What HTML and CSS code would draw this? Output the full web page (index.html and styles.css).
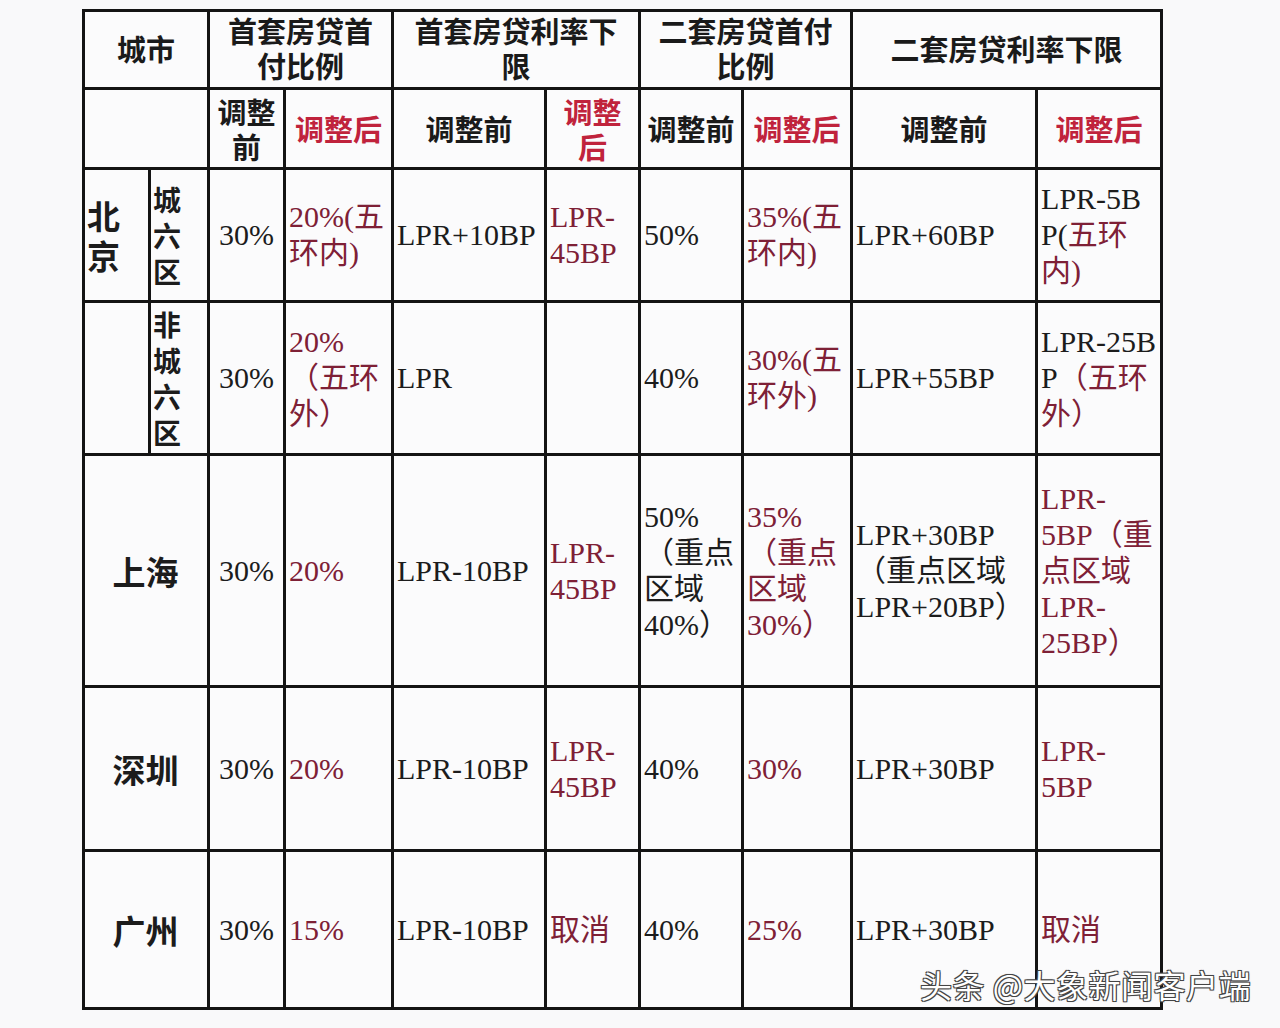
FILE: index.html
```html
<!DOCTYPE html>
<html lang="zh-CN">
<head>
<meta charset="utf-8">
<title>一线城市房贷政策调整</title>
<link rel="stylesheet" href="styles.css">
</head>
<body>
<div class="page">
  <table class="policy">
    <colgroup>
      <col class="c1"><col class="c2"><col class="c3"><col class="c4"><col class="c5">
      <col class="c6"><col class="c7"><col class="c8"><col class="c9"><col class="c10">
    </colgroup>
    <tr class="r1">
      <th colspan="2" class="h">城市</th>
      <th colspan="2" class="h">首套房贷首<br>付比例</th>
      <th colspan="2" class="h">首套房贷利率下<br>限</th>
      <th colspan="2" class="h">二套房贷首付<br>比例</th>
      <th colspan="2" class="h">二套房贷利率下限</th>
    </tr>
    <tr class="r2">
      <th colspan="2" class="h"></th>
      <th class="h">调整<br>前</th>
      <th class="h red">调整后</th>
      <th class="h">调整前</th>
      <th class="h red">调整<br>后</th>
      <th class="h">调整前</th>
      <th class="h red">调整后</th>
      <th class="h">调整前</th>
      <th class="h red">调整后</th>
    </tr>
    <tr class="r3">
      <td class="city big">北<br>京</td>
      <td class="city">城<br>六<br>区</td>
      <td class="mid">30%</td>
      <td class="red">20%(五<br>环内)</td>
      <td>LPR+10BP</td>
      <td class="red">LPR-<br>45BP</td>
      <td>50%</td>
      <td class="red">35%(五<br>环内)</td>
      <td>LPR+60BP</td>
      <td>LPR-5B<br>P(<span class="red">五环<br>内)</span></td>
    </tr>
    <tr class="r4">
      <td class="city"></td>
      <td class="city">非<br>城<br>六<br>区</td>
      <td class="mid">30%</td>
      <td class="red">20%<br>（五环<br>外）</td>
      <td>LPR</td>
      <td></td>
      <td>40%</td>
      <td class="red">30%(五<br>环外)</td>
      <td>LPR+55BP</td>
      <td>LPR-25B<br>P<span class="red">（五环<br>外）</span></td>
    </tr>
    <tr class="r5">
      <td colspan="2" class="city big center">上海</td>
      <td class="mid">30%</td>
      <td class="red">20%</td>
      <td>LPR-10BP</td>
      <td class="red">LPR-<br>45BP</td>
      <td>50%<br>（重点<br>区域<br>40%）</td>
      <td class="red">35%<br>（重点<br>区域<br>30%）</td>
      <td>LPR+30BP<br>（重点区域<br>LPR+20BP）</td>
      <td class="red">LPR-<br>5BP（重<br>点区域<br>LPR-<br>25BP）</td>
    </tr>
    <tr class="r6">
      <td colspan="2" class="city big center">深圳</td>
      <td class="mid">30%</td>
      <td class="red">20%</td>
      <td>LPR-10BP</td>
      <td class="red">LPR-<br>45BP</td>
      <td>40%</td>
      <td class="red">30%</td>
      <td>LPR+30BP</td>
      <td class="red">LPR-<br>5BP</td>
    </tr>
    <tr class="r7">
      <td colspan="2" class="city big center">广州</td>
      <td class="mid">30%</td>
      <td class="red">15%</td>
      <td>LPR-10BP</td>
      <td class="red">取消</td>
      <td>40%</td>
      <td class="red">25%</td>
      <td>LPR+30BP</td>
      <td class="red">取消</td>
    </tr>
  </table>
  <div class="watermark">头条 @大象新闻客户端</div>
</div>
</body>
</html>
```

FILE: styles.css
```css
html, body {
  margin: 0;
  padding: 0;
  background: #f9f9fa;
}

.page {
  position: relative;
  width: 1280px;
  height: 1028px;
  padding: 9px 0 0 82px;
  box-sizing: border-box;
}

.policy {
  border-collapse: collapse;
  table-layout: fixed;
  width: 1081px;
  background: #fbfbfc;
  font-family: "Liberation Serif", "Noto Sans CJK SC", serif;
  font-size: 30px;
  line-height: 36px;
  color: #1c1c1c;
}

.policy th,
.policy td {
  border: 3px solid #141414;
  padding: 0 3px;
  vertical-align: middle;
  text-align: left;
  overflow: hidden;
}

.c1 { width: 66px; }
.c2 { width: 59px; }
.c3 { width: 76px; }
.c4 { width: 108px; }
.c5 { width: 153px; }
.c6 { width: 94px; }
.c7 { width: 103px; }
.c8 { width: 109px; }
.c9 { width: 185px; }
.c10 { width: 125px; }

.r1 { height: 78px; }
.r2 { height: 80px; }
.r3 { height: 133px; }
.r4 { height: 153px; }
.r5 { height: 232px; }
.r6 { height: 164px; }
.r7 { height: 158px; }

.policy th.h {
  font-family: "Noto Sans CJK SC", sans-serif;
  font-weight: 700;
  font-size: 29px;
  line-height: 35px;
  text-align: center;
  color: #1a1a1a;
  padding: 0;
}

.policy .r1 th.h {
  padding-bottom: 3px;
}

.policy th.h.red {
  color: #c0233c;
}

.policy .red {
  color: #7e2036;
}

.policy td.mid {
  text-align: center;
}

.policy td.city {
  font-family: "Noto Sans CJK SC", sans-serif;
  font-weight: 700;
  font-size: 28px;
  line-height: 36px;
  padding-left: 2px;
}

.policy td.city.big {
  font-size: 33px;
  line-height: 40px;
}

.policy td.city.center {
  text-align: center;
}

.watermark {
  position: absolute;
  left: 920px;
  top: 962px;
  font-family: "Noto Sans CJK SC", sans-serif;
  font-size: 32px;
  line-height: 44px;
  color: #ffffff;
  letter-spacing: 0.5px;
  text-shadow:
    -1px -1px 0 #444, 1px -1px 0 #444, -1px 1px 0 #444, 1px 1px 0 #444,
    0 0 2px #555;
}
```
